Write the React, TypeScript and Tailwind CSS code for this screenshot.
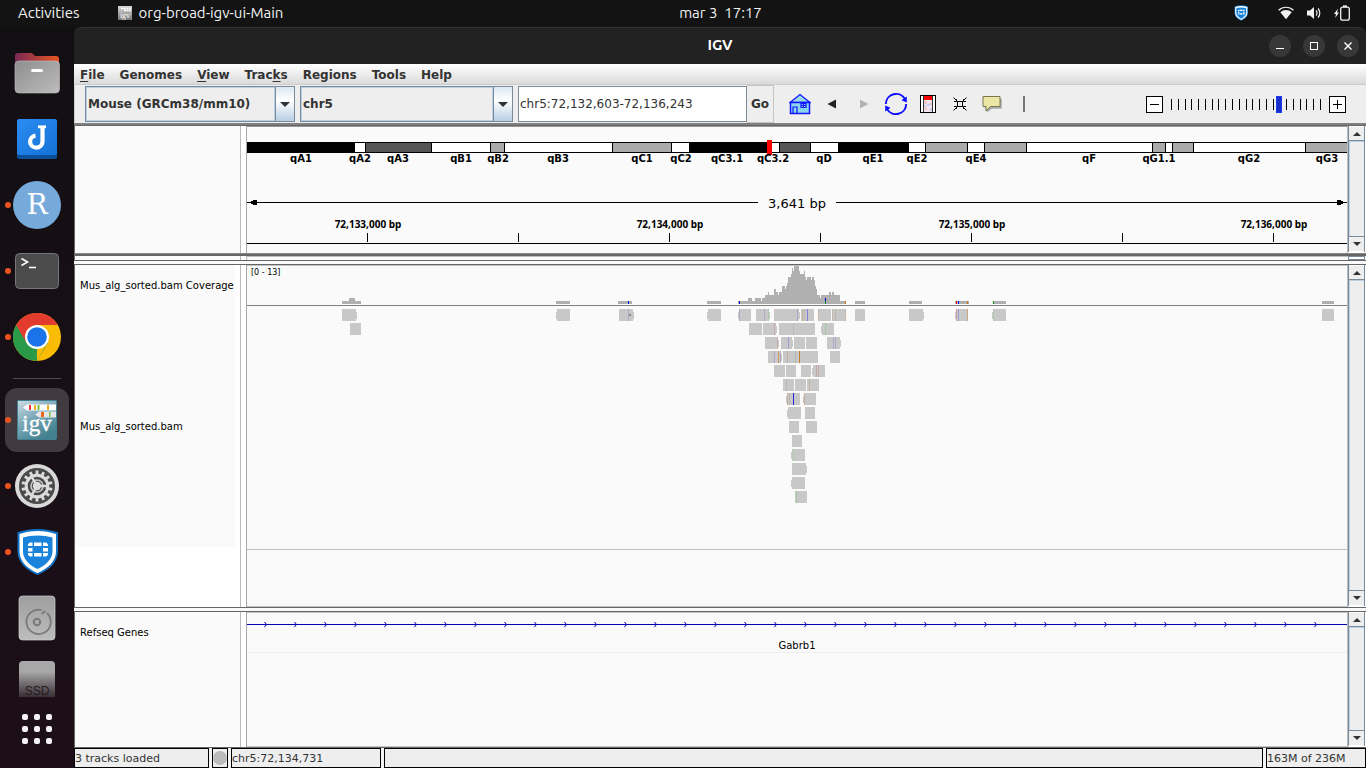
import React from 'react';

const VIEW_W = 1100;
const pct = (x: number) => `${(x / VIEW_W) * 100}%`;

/* ---------- data ---------- */

type Band = [start: number, end: number, fill: string];
const bands: Band[] = [
  [0, 107, '#000000'],
  [107, 118, '#ffffff'],
  [118, 184, '#555555'],
  [184, 243, '#ffffff'],
  [243, 257, '#aaaaaa'],
  [257, 365, '#ffffff'],
  [365, 424, '#aaaaaa'],
  [424, 442, '#ffffff'],
  [442, 519, '#000000'],
  [519, 532, '#ffffff'],
  [532, 563, '#555555'],
  [563, 591, '#ffffff'],
  [591, 661, '#000000'],
  [661, 678, '#ffffff'],
  [678, 720, '#aaaaaa'],
  [720, 737, '#ffffff'],
  [737, 779, '#aaaaaa'],
  [779, 905, '#ffffff'],
  [905, 918, '#aaaaaa'],
  [918, 925, '#ffffff'],
  [925, 946, '#aaaaaa'],
  [946, 1058, '#ffffff'],
  [1058, 1101, '#aaaaaa'],
];

const bandLabels: [string, number][] = [
  ['qA1', 54], ['qA2', 113], ['qA3', 151], ['qB1', 214], ['qB2', 251], ['qB3', 311],
  ['qC1', 395], ['qC2', 434], ['qC3.1', 480], ['qC3.2', 526], ['qD', 577], ['qE1', 626],
  ['qE2', 670], ['qE4', 729], ['qF', 842], ['qG1.1', 912], ['qG2', 1002], ['qG3', 1080],
];

const rulerTicks: [number, string?][] = [
  [120, '72,133,000 bp'], [271], [422, '72,134,000 bp'], [573],
  [724, '72,135,000 bp'], [875], [1026, '72,136,000 bp'],
];

/* start, end, height of each step */
const coverage: [number, number, number][] = [
  [95, 102, 3], [102, 108, 6], [108, 114, 3], [309, 323, 3], [371, 385, 3], [460, 474, 3],
  [491, 501, 3], [501, 505, 6], [505, 508, 3], [508, 514, 6], [514, 515, 3], [515, 518, 6],
  [518, 521, 9], [521, 522, 12], [522, 527, 9], [527, 529, 15], [529, 531, 12], [531, 532, 9],
  [532, 535, 12], [535, 538, 18], [538, 539, 15], [539, 540, 18], [540, 541, 21], [541, 544, 27],
  [544, 545, 30], [545, 546, 36], [546, 547, 33], [547, 552, 38], [552, 553, 33], [553, 557, 30],
  [557, 558, 33], [558, 559, 27], [559, 560, 24], [560, 564, 27], [564, 565, 24], [565, 567, 27],
  [567, 568, 24], [568, 569, 18], [569, 570, 15], [570, 573, 9], [573, 574, 6], [574, 579, 9],
  [579, 582, 9], [582, 584, 12], [584, 585, 9], [585, 587, 12], [587, 593, 9], [593, 599, 3],
  [608, 618, 3], [662, 675, 3], [708, 722, 3], [746, 759, 3], [1075, 1087, 3],
];

/* x, top offset above baseline, colour */
const coverageSnps: [number, number, string][] = [
  [381, 3, '#0000ff'], [492, 3, '#0000cc'], [578, 6, '#0000cc'], [578, 3, '#008800'],
  [598, 3, '#c87020'], [709, 3, '#ff0000'], [711, 3, '#0000ff'], [720, 3, '#c87020'], [746, 3, '#009600'],
];

type Read = [start: number, end: number, dir: 'L' | 'R' | ''];
const readRows: Read[][] = [
  [
    [95, 109, 'R'], [310, 323, 'L'], [372, 386, 'R'], [461, 474, 'L'], [492, 504, 'L'], [509, 522, 'R'],
    [527, 541, 'R'], [541, 552, 'R'], [554, 567, ''], [572, 584, 'L'], [586, 599, 'L'], [608, 618, ''],
    [662, 676, 'R'], [709, 721, 'L'], [746, 759, 'L'], [1075, 1087, ''],
  ],
  [[103, 114, ''], [502, 515, ''], [516, 529, 'R'], [532, 546, ''], [546, 556, ''], [556, 568, ''], [575, 587, 'L']],
  [[518, 531, 'R'], [534, 545, 'R'], [547, 558, ''], [559, 570, ''], [580, 593, 'R']],
  [[521, 534, 'R'], [536, 548, ''], [548, 559, ''], [559, 571, ''], [583, 593, '']],
  [[527, 538, ''], [539, 549, ''], [554, 564, ''], [566, 578, 'L']],
  [[536, 547, ''], [548, 559, ''], [560, 572, '']],
  [[540, 553, 'L'], [557, 569, 'L']],
  [[541, 554, 'L'], [558, 568, '']],
  [[542, 552, ''], [559, 570, '']],
  [[545, 555, '']],
  [[545, 558, 'L']],
  [[545, 559, 'R']],
  [[545, 558, 'L']],
  [[548, 560, '']],
];

/* row, x, colour */
const mismatches: [number, number, string][] = [
  [0, 381, '#aaaacc'], [0, 492, '#aaaacc'], [0, 517, '#aaaacc'], [0, 521, '#aaccaa'], [0, 550, '#aaaacc'],
  [0, 555, '#c0b4a8'], [0, 557, '#c0b4a8'], [0, 560, '#8080d8'], [0, 571, '#c8b8a8'], [0, 585, '#c8b8a8'],
  [0, 588, '#c0b4a8'], [0, 598, '#c8b8a8'], [0, 709, '#d0a0a0'], [0, 711, '#a0a0d8'], [0, 720, '#c8a888'],
  [0, 746, '#aaccaa'], [1, 527, '#ccaaaa'], [1, 546, '#b8b8b8'], [1, 578, '#a0cca0'], [2, 530, '#ccaaaa'],
  [2, 541, '#9c9cd0'], [2, 586, '#aaaacc'], [2, 588, '#aaaacc'], [3, 527, '#aaaacc'], [3, 531, '#cc9a60'],
  [3, 533, '#b0a8b8'], [3, 540, '#c8b098'], [3, 548, '#b4b4b4'], [3, 552, '#c87e2c'], [4, 569, '#bcaaa8'],
  [4, 571, '#ccaaaa'], [5, 539, '#b8b8b8'], [5, 562, '#c0b4a0'], [6, 540, '#c0b4a8'], [6, 542, '#c0b4a8'],
  [6, 546, '#2828e0'], [6, 557, '#c8b0a0'], [10, 546, '#aaccaa'], [13, 549, '#a0cca0'],
];

/* ---------- dock icons ---------- */

function FilesIcon() {
  return (
    <svg width="48" height="48" viewBox="0 0 48 48" aria-hidden="true">
      <defs>
        <linearGradient id="fback" x1="0" x2="1"><stop offset="0" stopColor="#7a2a56" /><stop offset="1" stopColor="#e95420" /></linearGradient>
        <linearGradient id="ffront" x1="0" y1="0" x2="1" y2="1"><stop offset="0" stopColor="#8e8e8e" /><stop offset="1" stopColor="#bcbcbc" /></linearGradient>
      </defs>
      <path d="M2 20V7a3 3 0 0 1 3-3h13a3 3 0 0 1 2 1l2 2h21a3 3 0 0 1 3 3v12z" fill="url(#fback)" />
      <rect x="2" y="12" width="44.500" height="32" rx="4" fill="url(#ffront)" stroke="#c4c4c4" strokeWidth=".6" />
      <rect x="18" y="20" width="12" height="3" rx="1.500" fill="#fff" />
    </svg>
  );
}

function JabRefIcon() {
  return (
    <svg width="48" height="48" viewBox="0 0 48 48" aria-hidden="true">
      <defs><linearGradient id="jb" x1="0" y1="0" x2="1" y2="1"><stop offset="0" stopColor="#2b8cf2" /><stop offset="1" stopColor="#1372d4" /></linearGradient></defs>
      <rect x="4" y="4" width="40" height="40" rx="2.500" fill="#0c4f9c" />
      <rect x="4" y="4" width="40" height="36" rx="2.500" fill="url(#jb)" />
      <path d="M25 11.800h8" fill="none" stroke="#fff" strokeWidth="2.800" />
      <path d="M29.500 12v15a6.200 6 0 1 1-7-6.300" fill="none" stroke="#fff" strokeWidth="4.200" />
    </svg>
  );
}

function RIcon() {
  return (
    <span className="flex size-12 items-center justify-center rounded-full bg-[#75aadb] pb-px font-['DejaVu_Serif',serif] text-[28px] leading-none text-white">
      R
    </span>
  );
}

function TerminalIcon() {
  return (
    <svg width="48" height="48" viewBox="0 0 48 48" aria-hidden="true">
      <rect x="2.500" y="6.500" width="43" height="35" rx="4" fill="#4b4b4b" stroke="#777" />
      <path d="M8.500 11.500l6 3.500-6 3.500" fill="none" stroke="#fff" strokeWidth="1.600" />
      <path d="M16 20.500h7" stroke="#fff" strokeWidth="1.600" />
    </svg>
  );
}

function ChromeIcon() {
  return (
    <svg width="48" height="48" viewBox="0 0 48 48" aria-hidden="true">
      <circle cx="24" cy="24" r="24" fill="#fbbc05" />
      <path d="M24 24L3.200 12A24 24 0 0 0 24 48l11-18z" fill="#2a9a48" />
      <path d="M3.200 12A24 24 0 0 1 44.800 12H24l-10.400 18z" fill="#e33b2e" />
      <path d="M24 48l10.400-18A12 12 0 0 0 24 24z" fill="#fbbc05" />
      <circle cx="24" cy="24" r="12" fill="#fff" />
      <circle cx="24" cy="24" r="9.800" fill="#1a73e8" />
    </svg>
  );
}

function IgvIcon() {
  return (
    <svg width="40" height="40" viewBox="0 0 40 40" aria-hidden="true">
      <defs><linearGradient id="ig" x1="0" y1="0" x2=".6" y2="1"><stop offset="0" stopColor="#cfdde3" /><stop offset=".5" stopColor="#7aa8b8" /><stop offset="1" stopColor="#42818f" /></linearGradient></defs>
      <rect x=".5" y=".5" width="39" height="39" rx="1" fill="url(#ig)" stroke="#3f8193" />
      <path d="M6 7.500l4-3h29v6H10z" fill="#fff" />
      <rect x="12" y="5" width="2" height="5" fill="#e33" />
      <rect x="17" y="5" width="2" height="5" fill="#f2b01e" />
      <rect x="20.500" y="5" width="2" height="5" fill="#7bc043" />
      <rect x="30" y="5" width="2" height="5" fill="#f2b01e" />
      <path d="M18 14.500l4-3h17v6H22z" fill="#e6e6e6" />
      <rect x="24" y="12" width="3" height="5" fill="#e8671a" />
      <rect x="32" y="12" width="1.500" height="5" fill="#7bc043" />
      <text x="20" y="31" textAnchor="middle" fontFamily="Liberation Serif, serif" fontSize="23" fill="#fff" stroke="#fff" strokeWidth=".4">igv</text>
    </svg>
  );
}

function SettingsIcon() {
  const teeth = Array.from({ length: 14 }, (_, i) => i * (360 / 14));
  return (
    <svg width="48" height="48" viewBox="0 0 48 48" aria-hidden="true">
      <circle cx="24" cy="24" r="22" fill="#d9d9d9" />
      <circle cx="24" cy="24" r="18" fill="#4a4a4a" />
      {teeth.map((a) => (
        <rect key={a} x="22.600" y="8.500" width="2.800" height="5" fill="#dcdcdc" transform={`rotate(${a} 24 24)`} />
      ))}
      <circle cx="24" cy="24" r="10.800" fill="none" stroke="#dcdcdc" strokeWidth="3" />
      <circle cx="24" cy="24" r="6" fill="none" stroke="#c6c6c6" strokeWidth="1.600" />
      <circle cx="24" cy="24" r="4.200" fill="#dcdcdc" />
      <path d="M24 24h10M24 24l-5-8.700M24 24l-5 8.700" stroke="#dcdcdc" strokeWidth="2.400" />
    </svg>
  );
}

function ShieldIcon({ size }: { size: number }) {
  return (
    <svg width={size} height={size} viewBox="0 0 48 48" aria-hidden="true">
      <path d="M24.500 1C17 1 10 2.300 4.500 4.300v19C4.500 34 13 42.500 24.500 47 36 42.500 45 34 45 23.300v-19C39 2.300 32 1 24.500 1z" fill="#1173c7" />
      <path d="M24.500 3C18 3 12 4 6.500 6v17.500C6.500 33 14 40.500 24.500 45 35 40.500 43 33 43 23.500V6C37 4 31 3 24.500 3z" fill="#fff" />
      <path d="M24.500 7.500C19 7.500 14 8.300 10 9.500v14c0 7.500 6 13.500 14.500 17.500C33 37 39.500 31 39.500 23.500v-14c-4.500-1.200-9.500-2-15-2z" fill="#1a84dc" />
      <path d="M15 17c0-1 1-2.500 2.500-2.500h2V18H15zM21 14.500h7.500V18H21zM30 14.500h2.500C34 14.500 35 16 35 17v1h-5zM15 20h4.500v3.500H15zM30 20h5v3.500h-5zM15 25h4.500v3.500h-2C16 28.500 15 27 15 26zM21 25h7.500v3.500H21zM30 25h5v1c0 1-1 2.500-2.500 2.500H30z" fill="#fff" />
    </svg>
  );
}

function DiskIcon() {
  return (
    <svg width="48" height="48" viewBox="0 0 48 48" aria-hidden="true">
      <defs><linearGradient id="dk" x1="0" y1="0" x2="0" y2="1"><stop offset="0" stopColor="#9e9e9e" /><stop offset="1" stopColor="#bdbdbd" /></linearGradient></defs>
      <rect x="6" y="2" width="36" height="44" rx="3.500" fill="url(#dk)" stroke="#cfcfcf" strokeWidth=".7" />
      <path d="M34 19.500A12.200 12.200 0 1 1 28.500 16.500M28.500 20.500l4-3" transform="translate(0 -.5)" fill="none" stroke="#7a7a7a" strokeWidth="1.800" />
      <circle cx="24" cy="28" r="3.200" fill="none" stroke="#7a7a7a" strokeWidth="2" />
    </svg>
  );
}

function SsdIcon() {
  return (
    <span className="flex h-9 w-9 items-end justify-center rounded-t bg-linear-to-b from-[#a8a8a8] from-30% to-[#3a3036] font-['Liberation_Sans',sans-serif] text-[12px] leading-3 text-[#241b20]">
      SSD
    </span>
  );
}

function DockItem({ label, running, active, children }: { label: string; running?: boolean; active?: boolean; children: React.ReactNode }) {
  return (
    <button type="button" aria-label={label} className="relative flex h-[66px] w-full shrink-0 items-center justify-center">
      {running && <span className="absolute left-[5px] top-[30px] z-10 size-[6px] rounded-full bg-[#e95420]" />}
      <span className={active ? 'flex size-16 items-center justify-center rounded-xl bg-[#413b40]' : 'flex size-16 items-center justify-center'}>
        {children}
      </span>
    </button>
  );
}

function Dock() {
  return (
    <nav aria-label="Dock" className="flex w-[74px] shrink-0 flex-col bg-linear-to-b from-[#120f13] to-[#1d0f18] pt-[13px]">
      <DockItem label="Files"><FilesIcon /></DockItem>
      <DockItem label="JabRef"><JabRefIcon /></DockItem>
      <DockItem label="RStudio" running><RIcon /></DockItem>
      <DockItem label="Terminal" running><TerminalIcon /></DockItem>
      <DockItem label="Chrome" running><ChromeIcon /></DockItem>
      <div className="mx-[13px] my-2 h-px shrink-0 bg-[#4f4a4f]" />
      <DockItem label="IGV" running active><IgvIcon /></DockItem>
      <DockItem label="Settings" running><SettingsIcon /></DockItem>
      <DockItem label="VPN" running><ShieldIcon size={48} /></DockItem>
      <DockItem label="Disk"><DiskIcon /></DockItem>
      <button type="button" aria-label="SSD" className="flex justify-center pt-[10px]"><SsdIcon /></button>
      <button type="button" aria-label="Show applications" className="mt-[17px] flex justify-center">
        <span className="grid grid-cols-3 gap-[6px]">
          {Array.from({ length: 9 }, (_, i) => <span key={i} className="size-[6px] rounded-[2px] bg-[#f4f2f3]" />)}
        </span>
      </button>
    </nav>
  );
}

/* ---------- top bar ---------- */

function TopBar() {
  return (
    <header className="grid h-[27px] shrink-0 grid-cols-3 items-center bg-[#131313] pb-px font-['Ubuntu','Open_Sans',sans-serif] text-[15px] leading-5 text-[#f2f2f2]">
      <div className="flex items-center pl-[18px]">
        <button type="button">Activities</button>
        <button type="button" className="ml-[38px] flex items-center gap-[7px]">
          <svg width="14" height="14" viewBox="0 0 14 14" aria-hidden="true">
            <defs><linearGradient id="tg" x1="0" y1="0" x2="0" y2="1"><stop offset="0" stopColor="#d8d8d8" /><stop offset="1" stopColor="#777" /></linearGradient></defs>
            <rect width="14" height="14" fill="url(#tg)" />
            <path d="M3 2.500h10M6 4.500h7" stroke="#fff" strokeWidth="1.300" strokeDasharray="2 .6" />
            <text x="7" y="11.500" textAnchor="middle" fontFamily="Liberation Serif, serif" fontSize="8" fill="#fff">igv</text>
          </svg>
          org-broad-igv-ui-Main
        </button>
      </div>
      <button type="button" className="justify-self-center pl-[75px] whitespace-pre">mar 3  17:17</button>
      <div className="flex items-center justify-end pr-4">
        <span className="mr-[29px]"><ShieldIcon size={16} /></span>
        <svg className="mr-[12px]" width="16" height="16" viewBox="0 0 16 16" aria-hidden="true">
          <path d="M.6 5.300a10.500 10.500 0 0 1 14.800 0" fill="none" stroke="#f2f2f2" strokeWidth="1.200" />
          <path d="M2.300 7.200a8.200 8.200 0 0 1 11.400 0L8 14.200z" fill="#f2f2f2" />
        </svg>
        <svg className="mr-[12px]" width="16" height="16" viewBox="0 0 16 16" aria-hidden="true">
          <path d="M1 5.500h3L8 2v12l-4-3.500H1z" fill="#f2f2f2" />
          <path d="M10 5.500a3.500 3.500 0 0 1 0 5M12 3.500a6.500 6.500 0 0 1 0 9" fill="none" stroke="#f2f2f2" strokeWidth="1.200" />
        </svg>
        <svg width="16" height="16" viewBox="0 0 16 16" aria-hidden="true">
          <path d="M4 3.500L0 9h2l-.8 4L5 7.500H3z" fill="#f2f2f2" />
          <rect x="6.700" y="2.200" width="8.600" height="13" rx="2" fill="none" stroke="#f2f2f2" strokeWidth="1.300" />
          <rect x="9" y=".4" width="4" height="1.800" fill="#f2f2f2" />
        </svg>
      </div>
    </header>
  );
}

/* ---------- window chrome ---------- */

function WindowButton({ label, children }: { label: string; children: React.ReactNode }) {
  return (
    <button type="button" aria-label={label} className="flex size-[22px] items-center justify-center rounded-full bg-[#383838]">
      <svg width="10" height="10" viewBox="0 0 10 10" fill="none" stroke="#fff" aria-hidden="true">{children}</svg>
    </button>
  );
}

function TitleBar() {
  return (
    <div className="grid h-[37px] shrink-0 grid-cols-3 items-center rounded-t-[8px] border-t border-[#343434] bg-[#222222] pb-px">
      <span />
      <h1 className="text-center font-['Ubuntu','Open_Sans',sans-serif] text-[15px] font-bold text-white">IGV</h1>
      <div className="flex justify-end gap-3 pr-[7px]">
        <WindowButton label="Minimize"><path d="M1 7.500h8" /></WindowButton>
        <WindowButton label="Maximize"><rect x="1.500" y="1.500" width="7" height="7" /></WindowButton>
        <WindowButton label="Close"><path d="M1.500 1.500l7 7M8.500 1.500l-7 7" strokeWidth="1.400" /></WindowButton>
      </div>
    </div>
  );
}

function MenuBar() {
  const items: [string, string, string][] = [
    ['', 'F', 'ile'], ['Genomes', '', ''], ['', 'V', 'iew'], ['Trac', 'k', 's'], ['Regions', '', ''], ['Tools', '', ''], ['Help', '', ''],
  ];
  return (
    <div role="menubar" className="flex h-[21px] shrink-0 items-center gap-[15px] border-b border-[#cccccc] bg-linear-to-b from-white to-[#dadada] pt-px pl-[6px] text-[12px] leading-4 font-bold text-[#333333]">
      {items.map(([a, b, c]) => (
        <button key={a + b + c} type="button" role="menuitem">{a}{b && <u className="underline-offset-2">{b}</u>}{c}</button>
      ))}
    </div>
  );
}

function Combo({ label, value, width }: { label: string; value: string; width: string }) {
  return (
    <div className={`flex h-9 items-stretch border border-[#7a8a99] bg-[#eeeeee] ${width}`}>
      <select aria-label={label} className="min-w-0 flex-1 appearance-none border border-[#b8cfe5] bg-transparent pl-[1px] text-[12px] font-bold text-[#333333]">
        <option>{value}</option>
      </select>
      <span className="flex w-[19px] items-center justify-center border-l border-[#7a8a99] bg-linear-to-b from-[#dde8f3] via-white via-40% to-[#b8cfe5]">
        <svg width="10" height="5" viewBox="0 0 10 5" aria-hidden="true"><path d="M0 0h10L5 5z" fill="#333" /></svg>
      </span>
    </div>
  );
}

function ToolButton({ label, children }: { label: string; children: React.ReactNode }) {
  return <button type="button" aria-label={label} className="flex size-8 items-center justify-center">{children}</button>;
}

function Toolbar() {
  return (
    <div className="flex h-[38px] shrink-0 items-center bg-[#eeeeee] text-[12px] text-[#333333]">
      <div className="flex items-center gap-[5px] border-l border-[#cccccc] pl-[10px]">
        <Combo label="Genome" value="Mouse (GRCm38/mm10)" width="w-[210px]" />
        <Combo label="Chromosome" value="chr5" width="w-[213px]" />
        <input
          aria-label="Locus"
          defaultValue="chr5:72,132,603-72,136,243"
          className="h-9 w-[229px] border border-[#7a8a99] bg-white px-[1px] text-[12px] outline-none"
        />
      </div>
      <button type="button" className="h-[38px] w-[27px] border-y border-r border-[#c4c4c4] font-bold">Go</button>
      <div className="ml-[10px] flex items-center">
        <ToolButton label="Home">
          <svg width="22" height="22" viewBox="0 0 22 22" aria-hidden="true">
            <path d="M1 9.500L11 1.500l10 8z" fill="#9adbe8" stroke="#1414ff" strokeWidth="1.300" />
            <path d="M1.500 9.500h19v11h-19z" fill="#8ad6ea" stroke="#1414ff" strokeWidth="1.500" />
            <path d="M4 20.500v-6.500h4v6.500M12 10.500h5v4h-5zM14.500 10.500v4M12 12.500h5" fill="none" stroke="#1414ff" strokeWidth="1.200" />
          </svg>
        </ToolButton>
        <ToolButton label="Back">
          <svg width="10" height="10" viewBox="0 0 10 10" aria-hidden="true"><path d="M9 .5v9L.5 5z" fill="#222" /></svg>
        </ToolButton>
        <ToolButton label="Forward">
          <svg width="10" height="10" viewBox="0 0 10 10" aria-hidden="true"><path d="M1 .5v9L9.500 5z" fill="#b4b4b4" /></svg>
        </ToolButton>
        <ToolButton label="Refresh">
          <svg width="24" height="24" viewBox="0 0 24 24" aria-hidden="true">
            <path d="M1.800 12A10.300 10.300 0 0 1 21 7M22.200 12A10.300 10.300 0 0 1 3 17" fill="none" stroke="#0a0aff" strokeWidth="1.900" />
            <path d="M22.800 4.500v6l-5.300-2.300zM1.200 19.500v-6l5.300 2.300z" fill="#0a0aff" />
          </svg>
        </ToolButton>
        <ToolButton label="Region of interest">
          <svg width="16" height="18" viewBox="0 0 16 18" aria-hidden="true">
            <rect x=".5" y=".5" width="15" height="17" fill="#fff" stroke="#000" />
            <rect x="3" y="1" width="10" height="16" fill="#f6e4ee" />
            <path d="M4 6h3v3H4zM9 8h3v2H9zM5 12h2v3H5z" fill="#f3c3c8" />
            <path d="M7 9h3v2H7zM10 13h2v3h-2zM4 10h2v2H4z" fill="#c3cdf3" />
            <path d="M3.500 1v16M12.500 1v16" stroke="#333" />
            <rect x="4" y="1" width="8" height="4" fill="#f00" />
          </svg>
        </ToolButton>
        <ToolButton label="Collapse">
          <svg width="14" height="14" viewBox="0 0 14 14" fill="none" stroke="#000" aria-hidden="true">
            <rect x="4.500" y="4.500" width="5" height="5" />
            <path d="M.5.500l3 3M13.500.500l-3 3M.5 13.500l3-3M13.500 13.500l-3-3M1 4.500h2.500V2M13 4.500h-2.500V2M1 9.500h2.500V12M13 9.500h-2.500V12" />
          </svg>
        </ToolButton>
        <ToolButton label="Popup text">
          <svg width="20" height="18" viewBox="0 0 20 18" aria-hidden="true">
            <path d="M2 3h17v10H9l-5 4v-4H2z" fill="#aaa" transform="translate(.8 .8)" />
            <path d="M1 1.500h17v10H8.500L4 16v-4.500H1z" fill="#ece6a4" stroke="#77774f" />
          </svg>
        </ToolButton>
        <ToolButton label="Center line"><span className="h-[16px] w-[2px] bg-[#777777]" /></ToolButton>
      </div>
      <div className="ml-auto flex items-center gap-[5px] pr-[20px]">
        <button type="button" aria-label="Zoom out" className="flex size-[17px] items-center justify-center border border-black bg-white">
          <svg width="9" height="9" viewBox="0 0 9 9" aria-hidden="true"><path d="M0 4.500h9" stroke="#000" /></svg>
        </button>
        <div className="relative h-[17px] w-[156px]">
          <svg className="block size-full" shapeRendering="crispEdges" aria-hidden="true">
            {Array.from({ length: 23 }, (_, i) => (
              <rect key={i} x={Math.round(3 + (i * 149) / 22)} y="3" width="1" height="11" fill="#000" />
            ))}
          </svg>
          <input
            type="range"
            aria-label="Zoom level"
            min={0}
            max={22}
            defaultValue={16}
            className="absolute inset-y-0 left-0 m-0 h-[17px] w-[154px] appearance-none bg-transparent [&::-webkit-slider-thumb]:h-[17px] [&::-webkit-slider-thumb]:w-[6px] [&::-webkit-slider-thumb]:appearance-none [&::-webkit-slider-thumb]:border [&::-webkit-slider-thumb]:border-[#1a3cf0] [&::-webkit-slider-thumb]:bg-[#1a2fc8]"
          />
        </div>
        <button type="button" aria-label="Zoom in" className="flex size-[17px] items-center justify-center border border-black bg-white">
          <svg width="9" height="9" viewBox="0 0 9 9" aria-hidden="true"><path d="M0 4.500h9M4.500 0v9" stroke="#000" /></svg>
        </button>
      </div>
    </div>
  );
}

/* ---------- panels ---------- */

function ScrollBar() {
  return (
    <div className="flex w-[19px] shrink-0 border-l border-[#bbbbbb] bg-white pb-px">
      <div className="flex w-[17px] flex-col border-x border-[#7a8a99] bg-[#eeeeee]">
        <button type="button" aria-label="Scroll up" className="flex h-[15px] shrink-0 items-center justify-center border-t border-b border-white border-b-[#7a8a99]">
          <svg width="8" height="4" viewBox="0 0 8 4" aria-hidden="true"><path d="M0 4h8L4 0z" fill="#333" /></svg>
        </button>
        <div className="flex-1 border-t border-l border-[#b8cfe5]" />
        <button type="button" aria-label="Scroll down" className="flex h-4 shrink-0 items-center justify-center border-t border-b border-[#7a8a99] border-b-white">
          <svg width="8" height="4" viewBox="0 0 8 4" aria-hidden="true"><path d="M0 0h8L4 4z" fill="#333" /></svg>
        </button>
      </div>
    </div>
  );
}

function Panel({ className, names, children }: { className: string; names: React.ReactNode; children: React.ReactNode }) {
  return (
    <section className={`flex border-l border-[#666666] bg-[#fafafa] ${className}`}>
      <div className="w-[165px] shrink-0 text-[10px] leading-3 text-black">{names}</div>
      <div className="w-[7px] shrink-0 border-x border-l-[#bbbbbb] border-r-[#aaaaaa] bg-white" />
      <div className="min-w-0 flex-1">{children}</div>
      <ScrollBar />
    </section>
  );
}

function Ruler() {
  return (
    <svg className="block h-[127px] w-full" shapeRendering="crispEdges" role="img" aria-label="Chromosome ideogram and ruler">
      <rect x="0" y="0" width="100%" height="1" fill="#999999" />
      {bands.map(([s, e, fill]) => (
        <React.Fragment key={s}>
          <rect x={pct(s)} y="16" width={pct(e - s)} height="11" fill="#000" />
          <rect x={pct(s + 1)} y="17" width={pct(e - s - 1)} height="9" fill={fill} />
        </React.Fragment>
      ))}
      <rect x={pct(520)} y="14" width="5" height="15" fill="#f00" />
      {bandLabels.map(([t, x]) => (
        <text key={t} x={pct(x)} y="36" textAnchor="middle" fontSize="10" fontWeight="bold">{t}</text>
      ))}
      <rect x="0" y="76" width={pct(511)} height="1" />
      <rect x={pct(589)} y="76" width={pct(511)} height="1" />
      <path d="M4 75h2v-1h4v5h-4v-1h-2z" />
      <svg x="100%" y="0" overflow="visible"><path d="M-4 75h-2v-1h-4v5h4v-1h2z" /></svg>
      <text x="50%" y="82" textAnchor="middle" fontSize="13">3,641 bp</text>
      {rulerTicks.map(([x, label]) => (
        <React.Fragment key={x}>
          <rect x={pct(x)} y="107" width="1" height="9" />
          {label && <text x={pct(x + 1)} y="102" textAnchor="middle" fontFamily="Noto Sans, sans-serif" fontSize="10" fontWeight="bold">{label}</text>}
        </React.Fragment>
      ))}
      <rect x="0" y="117" width="100%" height="1" />
    </svg>
  );
}

const COV_BASE = 38;

function Alignments() {
  return (
    <svg className="block size-full" shapeRendering="crispEdges" role="img" aria-label="Coverage and alignments">
      <text x="4" y="9" fontSize="8">[0 - 13]</text>
      {coverage.map(([s, e, h]) => (
        <rect key={s} x={pct(s)} y={COV_BASE - h} width={pct(e - s)} height={h} fill="#b0b0b0" />
      ))}
      {coverageSnps.map(([x, h, c]) => (
        <rect key={`${x}-${h}`} x={pct(x)} y={COV_BASE - h} width="1" height="3" fill={c} />
      ))}
      <rect x="0" y="39" width="100%" height="1" fill="#808080" />
      {readRows.map((row, r) =>
        row.map(([s, e, dir]) => {
          const y = 43 + r * 14;
          return (
            <g key={`${r}-${s}`} fill="#c8c8c8">
              <rect x={pct(s)} y={y} width={pct(e - s)} height="12" />
              {dir === 'R' && <rect x={pct(e)} y={y + 3} width="1" height="7" />}
              {dir === 'L' && <rect x={pct(s - 1)} y={y + 3} width="1" height="7" />}
            </g>
          );
        }),
      )}
      {mismatches.map(([r, x, c]) => (
        <rect key={`${r}-${x}`} x={pct(x)} y={43 + r * 14} width="1" height="12" fill={c} />
      ))}
      <rect x={pct(382)} y="48" width="2" height="2" fill="#888" />
      <rect x="0" y="283" width="100%" height="1" fill="#c0c0c0" />
    </svg>
  );
}

function Genes() {
  return (
    <svg className="block h-[46px] w-full" role="img" aria-label="Gene annotations">
      <rect x="0" y="11" width="100%" height="1" fill="#0000b2" />
      {Array.from({ length: 36 }, (_, i) => (
        <svg key={i} x={pct(17 + i * 30)} y="9" width="4" height="5">
          <path d="M.5 0l2 2.500-2 2.500" fill="none" stroke="#0000b2" />
        </svg>
      ))}
      <text x="50%" y="36" textAnchor="middle" fontSize="10">Gabrb1</text>
      <rect x="0" y="39" width="100%" height="1" fill="#eeeeee" />
    </svg>
  );
}

function StatusBar() {
  const cell = 'flex items-center border border-black bg-[#eeeeee]';
  return (
    <footer className="flex h-[20px] shrink-0 gap-[3px] bg-[#f4f4f4] text-[11px] leading-4 text-[#333333]">
      <span className={`${cell} w-[135px] pt-px`}>3 tracks loaded</span>
      <span className={`${cell} w-[16px] justify-center`}><span className="size-[14px] shrink-0 rounded-full bg-[#bbbbbb]" /></span>
      <span className={`${cell} w-[150px] pt-px`}>chr5:72,134,731</span>
      <span className={`${cell} flex-1`} />
      <span className={`${cell} w-[100px] pt-px`}>163M of 236M</span>
    </footer>
  );
}

export default function App() {
  return (
    <div className="flex h-screen flex-col overflow-hidden bg-[#131313] font-['DejaVu_Sans',sans-serif]">
      <TopBar />
      <div className="flex min-h-0 flex-1">
        <Dock />
        <main className="flex min-w-0 flex-1 flex-col">
          <TitleBar />
          <MenuBar />
          <Toolbar />
          <div className="h-[3px] shrink-0 border-b border-[#666666] bg-[#808080]" />
          <Panel className="h-[127px] shrink-0" names={null}>
            <Ruler />
          </Panel>
          <div className="h-[3px] shrink-0 border-t border-[#888888] bg-[#666666]" />
          <div className="flex h-1 shrink-0 border-l border-[#666666] bg-[#fafafa]">
            <div className="w-[165px]" />
            <div className="w-[7px] border-x border-[#bbbbbb] bg-white" />
            <div className="flex-1 border-t border-[#bbbbbb]" />
            <div className="mr-px w-[17px] border border-[#7a8a99] bg-white" />
          </div>
          <div className="h-[5px] shrink-0 border-y border-[#666666] bg-[#fafafa]" />
          <Panel
            className="min-h-0 flex-1"
            names={
              <div className="h-full bg-white">
                <div className="mr-[5px] h-[282px] bg-[#fafafa] pl-[5px]">
                  <p className="pt-[15px] whitespace-nowrap">Mus_alg_sorted.bam Coverage</p>
                  <p className="pt-[129px]">Mus_alg_sorted.bam</p>
                </div>
              </div>
            }
          >
            <div className="h-full border-y border-[#c4c4c4]"><Alignments /></div>
          </Panel>
          <div className="h-[5px] shrink-0 border-y border-[#666666] bg-[#fafafa]" />
          <Panel className="h-[135px] shrink-0" names={<p className="pt-[15px] pl-[5px]">Refseq Genes</p>}>
            <div className="h-full border-y border-[#c4c4c4]"><Genes /></div>
          </Panel>
          <div className="h-px shrink-0 bg-[#666666]" />
          <StatusBar />
        </main>
      </div>
    </div>
  );
}
